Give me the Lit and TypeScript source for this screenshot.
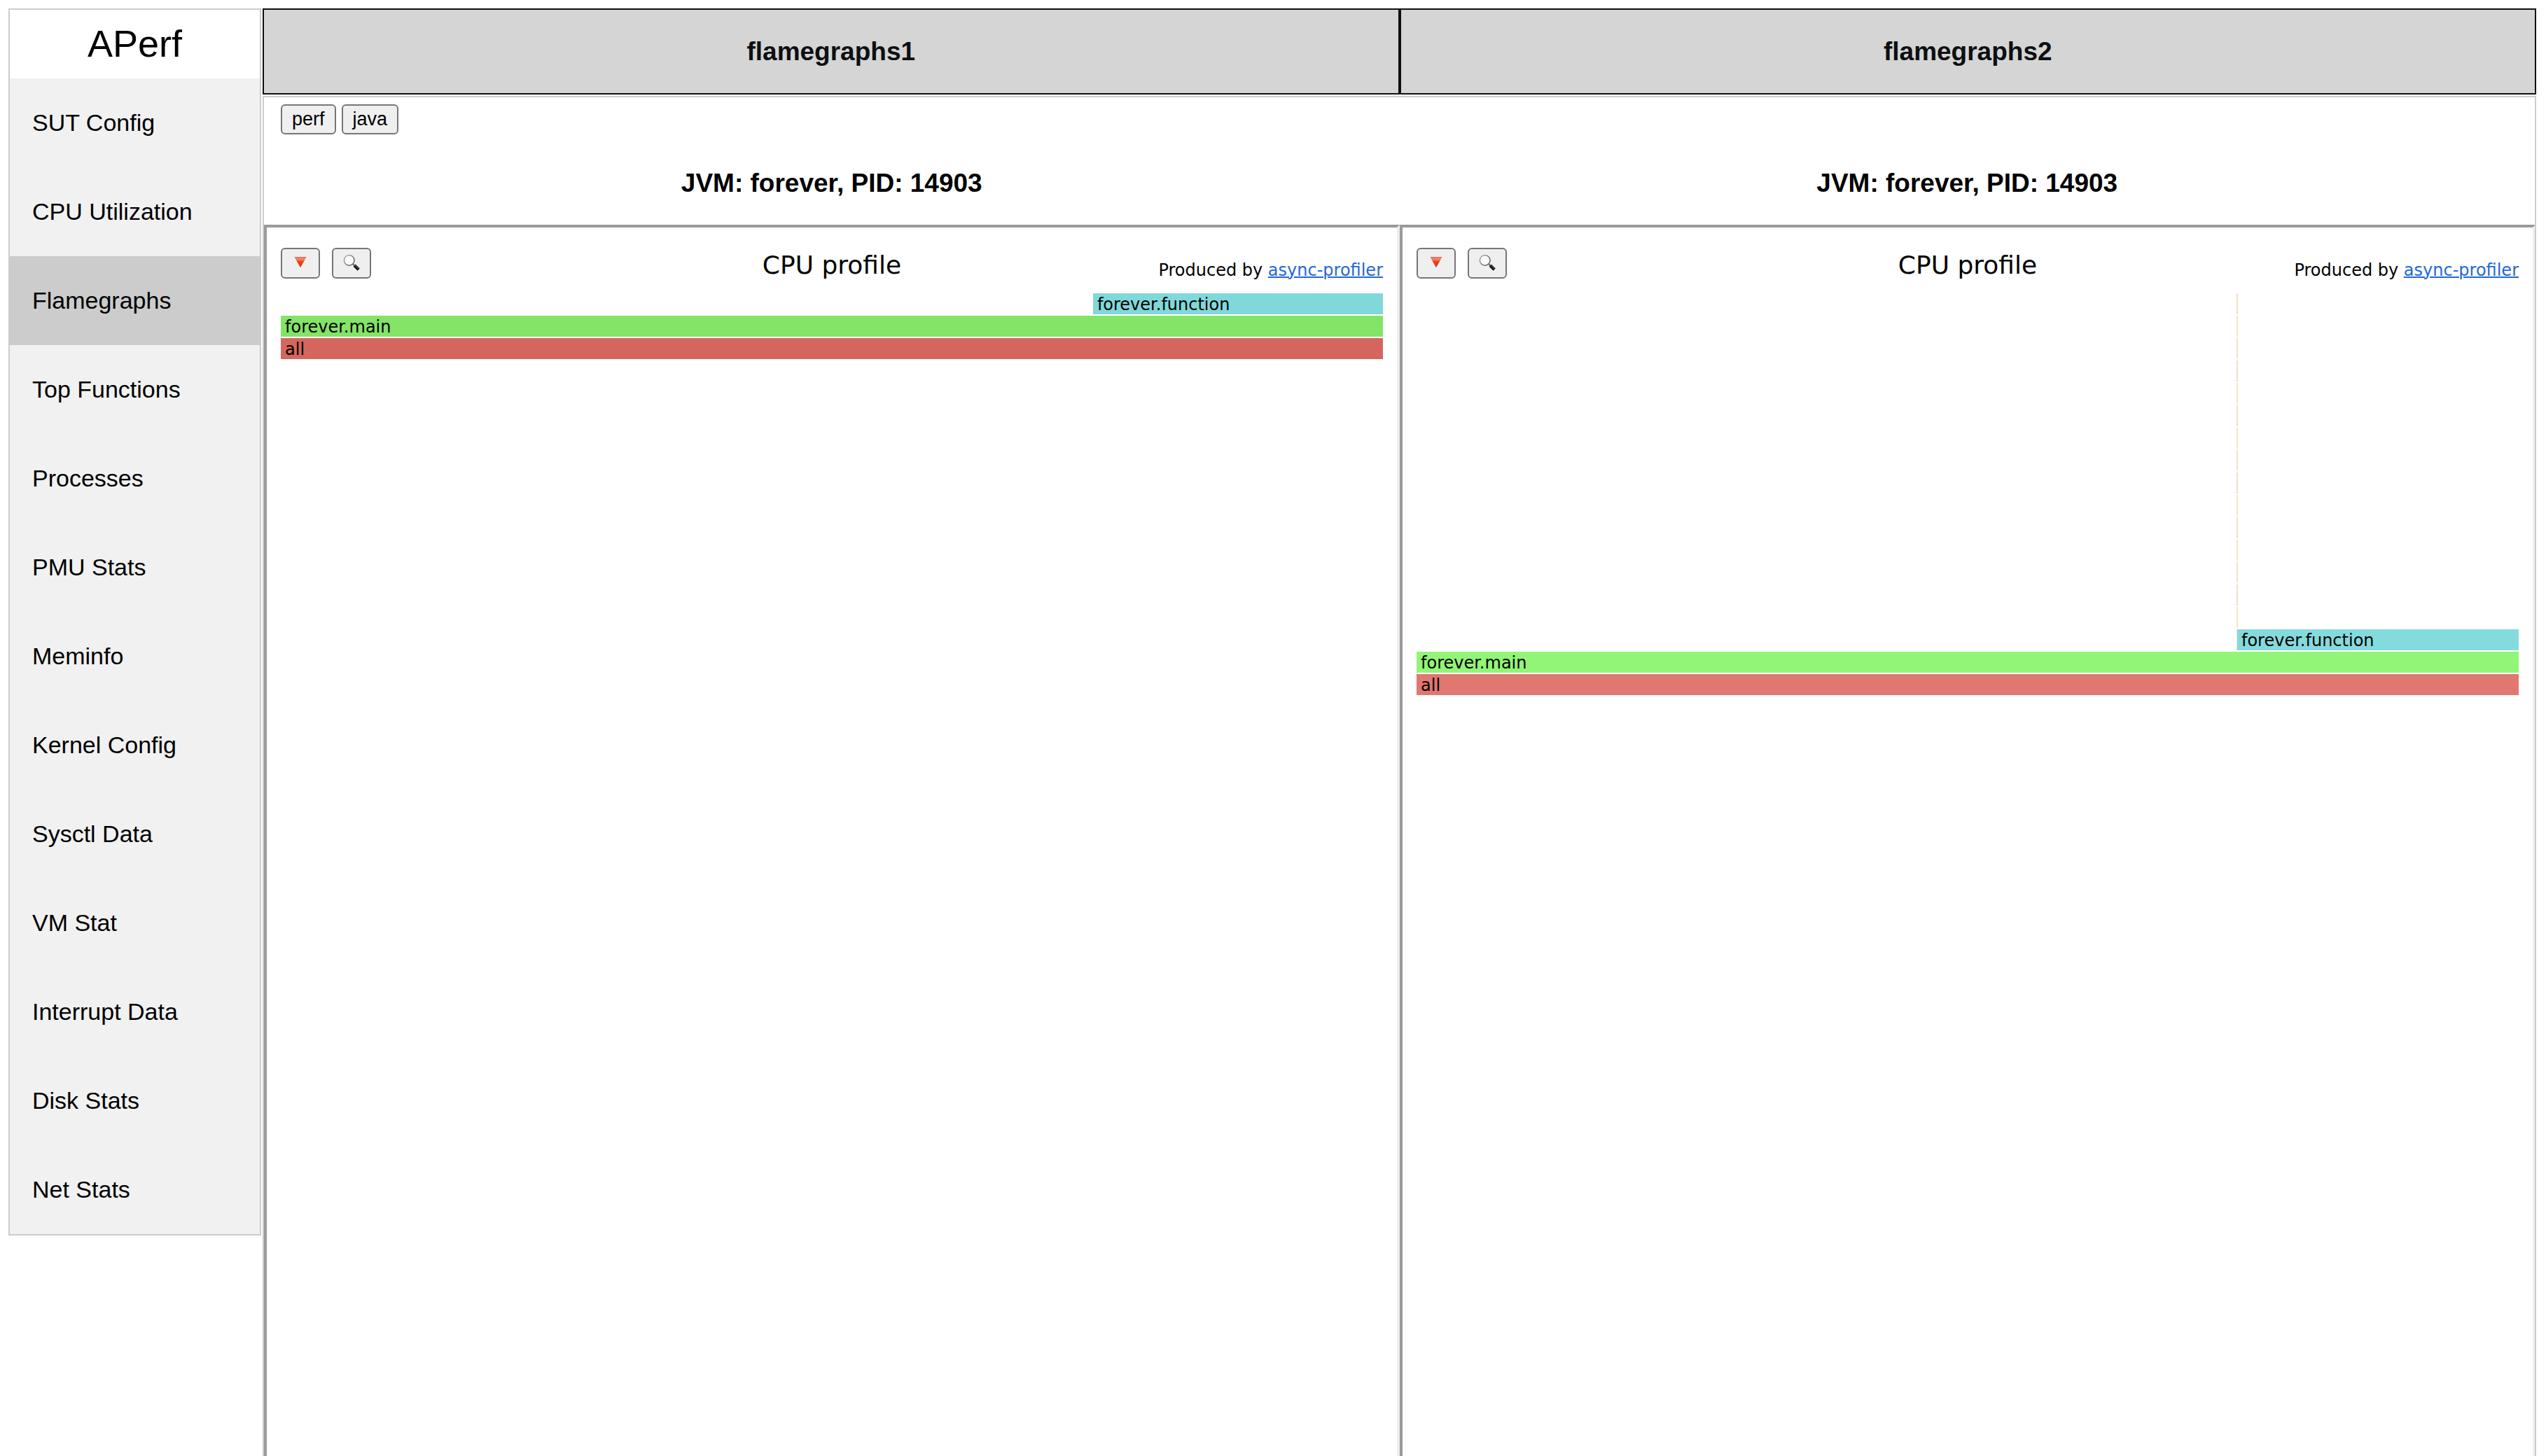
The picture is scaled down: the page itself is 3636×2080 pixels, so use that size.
import { LitElement, html, svg, css } from "lit";
import { customElement, property, state } from "lit/decorators.js";

interface Frame {
  name: string;
  left: number;
  width: number;
  color: string;
}

interface Row {
  frames: Frame[];
}

const full = (name: string, color: string): Row => ({
  frames: [{ name, left: 0, width: 100, color }],
});

const sliver = (color: string): Row => ({
  frames: [{ name: "", left: 74.4, width: 0.13, color }],
});

const SLIVERS = ["#f7e0c2", "#f9e2c0", "#f7dfc4", "#f4dac2", "#fae3c0"];

const RUNS: { name: string; rows: Row[] }[] = [
  {
    name: "flamegraphs1",
    rows: [
      { frames: [{ name: "forever.function", left: 73.69, width: 26.31, color: "#80d8da" }] },
      full("forever.main", "#84e467"),
      full("all", "#d4665f"),
    ],
  },
  {
    name: "flamegraphs2",
    rows: [
      ...Array.from({ length: 15 }, (_, i) => sliver(SLIVERS[i % SLIVERS.length])),
      {
        frames: [
          { name: "", left: 74.4, width: 0.06, color: "#f7e0c2" },
          { name: "forever.function", left: 0, width: 25.54, color: "#84dbdd" },
        ],
      },
      full("forever.main", "#92f577"),
      full("all", "#e07770"),
    ],
  },
];

const NAV = [
  "SUT Config",
  "CPU Utilization",
  "Flamegraphs",
  "Top Functions",
  "Processes",
  "PMU Stats",
  "Meminfo",
  "Kernel Config",
  "Sysctl Data",
  "VM Stat",
  "Interrupt Data",
  "Disk Stats",
  "Net Stats",
];

const triangleIcon = svg`
  <defs>
    <linearGradient id="tri" x1="0" y1="0" x2="0" y2="1">
      <stop offset="0" stop-color="#c8482e" />
      <stop offset="0.12" stop-color="#ff8a6c" />
      <stop offset="0.32" stop-color="#f9694a" />
      <stop offset="0.4" stop-color="#f0431d" />
      <stop offset="1" stop-color="#cf3413" />
    </linearGradient>
  </defs>
  <path d="M3.5 3.3h17l-8.5 15z" fill="url(#tri)" />`;

const lensIcon = svg`
  <defs>
    <linearGradient id="rim" x1="0" y1="0" x2="1" y2="1">
      <stop offset="0" stop-color="#a3c0dc" />
      <stop offset="0.4" stop-color="#85898d" />
      <stop offset="1" stop-color="#4c4f52" />
    </linearGradient>
  </defs>
  <path d="M14 13.2l3 2.8" stroke="#6a6e72" stroke-width="2" />
  <path d="M16.2 15.2l6 5.9" stroke="#15191c" stroke-width="4.6" />
  <path d="M17 14.6l5.4 5" stroke="#7d8387" stroke-width="0.8" />
  <circle cx="8.7" cy="7.9" r="7.3" fill="#f8f9f9" stroke="url(#rim)" stroke-width="1.5" />`;

@customElement("flame-chart")
export class FlameChart extends LitElement {
  @property({ attribute: false }) rows: Row[] = [];

  static styles = css`
    :host {
      display: block;
      box-sizing: border-box;
      min-width: 0;
      padding: 29px 20px 20px;
      border: 4px solid;
      border-color: #9a9a9a #eeeeee #eeeeee #9a9a9a;
      border-bottom: 0;
      font-family: Verdana, "DejaVu Sans", sans-serif;
      font-size: 24px;
      line-height: 32px;
      color: #000;
    }
    .bar {
      display: grid;
      grid-template-columns: 1fr auto 1fr;
      align-items: start;
      height: 65px;
    }
    .tools {
      display: flex;
      gap: 17px;
    }
    .tool {
      box-sizing: border-box;
      display: flex;
      align-items: center;
      justify-content: center;
      width: 56px;
      height: 44px;
      padding: 0;
      border: 2px solid #767676;
      border-radius: 6px;
      background: #efefef;
    }
    .icon {
      width: 24px;
      height: 24px;
    }
    .title {
      margin: 0;
      font-size: 36px;
      line-height: 50px;
      font-weight: 400;
    }
    .credit {
      margin: 0;
      padding-top: 16px;
      text-align: right;
    }
    .link {
      color: #2368d5;
      text-decoration-thickness: 2px;
    }
    .rows {
      display: flex;
      flex-direction: column;
      gap: 2px;
    }
    .row {
      display: flex;
      height: 30px;
    }
    .frame {
      box-sizing: border-box;
      flex: none;
      overflow: hidden;
      white-space: nowrap;
    }
    .label {
      padding-left: 6px;
    }
  `;

  render() {
    return html`
      <div class="bar">
        <div class="tools">
          <button class="tool" type="button" aria-label="Invert">
            <svg class="icon" viewBox="0 0 24 24">${triangleIcon}</svg>
          </button>
          <button class="tool" type="button" aria-label="Search">
            <svg class="icon" viewBox="0 0 24 24">${lensIcon}</svg>
          </button>
        </div>
        <h1 class="title">CPU profile</h1>
        <p class="credit">
          Produced by <a class="link" href="#async-profiler">async-profiler</a>
        </p>
      </div>
      <div class="rows">
        ${this.rows.map(
          (row) => html`<div class="row">
            ${row.frames.map(
              (f) => html`<div
                class="frame"
                style="margin-left:${f.left}%;width:${f.width}%;background:${f.color}"
              >
                ${f.name ? html`<span class="label">${f.name}</span>` : null}
              </div>`
            )}
          </div>`
        )}
      </div>
    `;
  }
}

@customElement("app-root")
export class AppRoot extends LitElement {
  @state() private active = "Flamegraphs";

  static styles = css`
    :host {
      box-sizing: border-box;
      display: flex;
      align-items: flex-start;
      gap: 2px;
      min-height: 100vh;
      padding: 12px 14px 0 12px;
      background: #fff;
      font-family: "Liberation Sans", Arial, Helvetica, sans-serif;
      color: #000;
    }
    .side {
      box-sizing: border-box;
      flex: none;
      display: flex;
      flex-direction: column;
      width: 361px;
      border: 2px solid #cccccc;
      background: #f1f1f1;
    }
    .brand {
      padding-bottom: 2px;
      background: #fff;
      text-align: center;
      font-size: 54px;
      line-height: 96px;
    }
    .nav {
      padding: 0 32px;
      border: 0;
      background: none;
      font: inherit;
      font-size: 34px;
      line-height: 127px;
      text-align: left;
      color: inherit;
    }
    .nav.active {
      background: #cccccc;
    }
    .main {
      flex: 1;
      align-self: stretch;
      min-width: 0;
      display: flex;
      flex-direction: column;
      gap: 2px;
    }
    .pair {
      display: grid;
      grid-template-columns: 1fr 1fr;
    }
    .run {
      border: 2px solid #0d0f12;
      background: #d5d5d5;
      color: #0d0f12;
      text-align: center;
      font-size: 37px;
      font-weight: 700;
      line-height: 119px;
    }
    .content {
      flex: 1;
      display: flex;
      flex-direction: column;
      overflow: hidden;
      border: 2px solid #cccccc;
      border-bottom: 0;
    }
    .kinds {
      display: flex;
      gap: 8px;
      padding: 10px 24px 0;
    }
    .kind {
      box-sizing: border-box;
      padding: 0 14px;
      border: 2px solid #767676;
      border-radius: 6px;
      background: #efefef;
      font: inherit;
      font-size: 27px;
      line-height: 39px;
      color: inherit;
    }
    .jvm {
      margin: 0;
      padding: 49px 0 38px;
      text-align: center;
      font-size: 37px;
      line-height: 42px;
      font-weight: 700;
    }
    .charts {
      flex: 1;
      margin-right: -1px;
    }
  `;

  render() {
    return html`
      <nav class="side">
        <div class="brand">APerf</div>
        ${NAV.map(
          (item) => html`<button
            type="button"
            class="nav ${item === this.active ? "active" : ""}"
            @click=${() => (this.active = item)}
          >
            ${item}
          </button>`
        )}
      </nav>
      <main class="main">
        <header class="pair">
          ${RUNS.map((run) => html`<div class="run">${run.name}</div>`)}
        </header>
        <section class="content">
          <div class="kinds">
            <button type="button" class="kind">perf</button>
            <button type="button" class="kind">java</button>
          </div>
          <div class="pair">
            ${RUNS.map(() => html`<h3 class="jvm">JVM: forever, PID: 14903</h3>`)}
          </div>
          <div class="pair charts">
            ${RUNS.map((run) => html`<flame-chart .rows=${run.rows}></flame-chart>`)}
          </div>
        </section>
      </main>
    `;
  }
}
